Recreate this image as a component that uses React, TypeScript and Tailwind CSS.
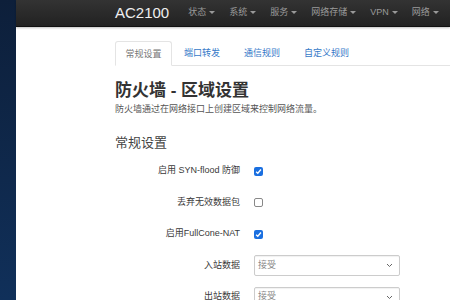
import React from 'react';

const menu = ['状态', '系统', '服务', '网络存储', 'VPN', '网络'];
const tabs = ['常规设置', '端口转发', '通信规则', '自定义规则'];

const Caret = () => <span className="ml-[3px] inline-block border-x-[3px] border-t-[3px] border-x-transparent border-t-[#999] align-middle" />;

const Check = ({ on }: { on: boolean }) =>
  on ? (
    <span className="flex h-[9px] w-[9px] items-center justify-center rounded-[2px] bg-[#1a6fe0]">
      <svg width="7" height="7" viewBox="0 0 8 8">
        <path d="M1.3 4.2 3.2 6 6.8 1.8" fill="none" stroke="#fff" strokeWidth="1.6" />
      </svg>
    </span>
  ) : (
    <span className="h-[9px] w-[9px] rounded-[2px] border border-[#888] bg-white" />
  );

const Row = ({ label, children }: { label: string; children: React.ReactNode }) => (
  <div className="flex h-[20px] items-center">
    <div className="w-[139px] shrink-0 whitespace-nowrap pr-[14px] text-right text-[9px] text-[#3a3a3a]">{label}</div>
    {children}
  </div>
);

const Select = () => (
  <div className="flex h-[21px] w-[146px] items-center justify-between rounded-[2px] border border-[#ccc] bg-white pl-[3px] pr-[6px] text-[9px] text-[#888] shadow-[inset_0_1px_1px_rgba(0,0,0,0.06)]">
    <span>接受</span>
    <svg width="7" height="5" viewBox="0 0 7 5">
      <path d="M1 1l2.5 2.5L6 1" fill="none" stroke="#666" strokeWidth="1" />
    </svg>
  </div>
);

export default function App() {
  return (
    <div className="flex h-[300px] w-[450px] overflow-hidden bg-white font-['Liberation_Sans','Noto_Sans_CJK_SC',sans-serif]">
      <div className="w-[16px] shrink-0 bg-gradient-to-b from-[#0d1f3a] to-[#10305a]" />
      <div className="flex min-w-0 flex-1 flex-col">
        <div className="flex h-[27px] shrink-0 items-center whitespace-nowrap border-b border-[#111] bg-gradient-to-b from-[#333] to-[#222] pl-[99px] shadow-[0_1px_2px_rgba(0,0,0,0.25)]">
          <span className="mr-[19px] text-[15px] text-[#eee]">AC2100</span>
          <div className="flex gap-[14px] text-[9px] text-[#9a9a9a]">
            {menu.map((m) => (
              <span key={m}>
                {m}
                <Caret />
              </span>
            ))}
            <span>管</span>
          </div>
        </div>
        <div className="pl-[99px] pt-[14px]">
          <div className="flex h-[25px] items-end border-b border-[#e4e4e4] text-[9px]">
            {tabs.map((t, i) =>
              i === 0 ? (
                <div key={t} className="-mb-px flex h-[25px] w-[57px] items-center justify-center rounded-t-[3px] border border-b-white border-[#e4e4e4] bg-white pt-[2px] text-[#777]">
                  {t}
                </div>
              ) : (
                <div key={t} className="flex h-[25px] items-center px-[12px] pt-[2px] text-[#3579c8]">
                  {t}
                </div>
              )
            )}
          </div>
          <h1 className="mt-[13px] text-[17px] font-bold leading-[24px] text-[#333]">防火墙 - 区域设置</h1>
          <p className="text-[9px] leading-[12px] text-[#555]">防火墙通过在网络接口上创建区域来控制网络流量。</p>
          <h2 className="mt-[19px] text-[13px] leading-[18px] text-[#444]">常规设置</h2>
          <div className="mt-[9px] flex flex-col gap-[11.5px]">
            <Row label="启用 SYN-flood 防御">
              <Check on />
            </Row>
            <Row label="丢弃无效数据包">
              <Check on={false} />
            </Row>
            <Row label="启用FullCone-NAT">
              <Check on />
            </Row>
            <Row label="入站数据">
              <Select />
            </Row>
            <Row label="出站数据">
              <Select />
            </Row>
          </div>
        </div>
      </div>
    </div>
  );
}
